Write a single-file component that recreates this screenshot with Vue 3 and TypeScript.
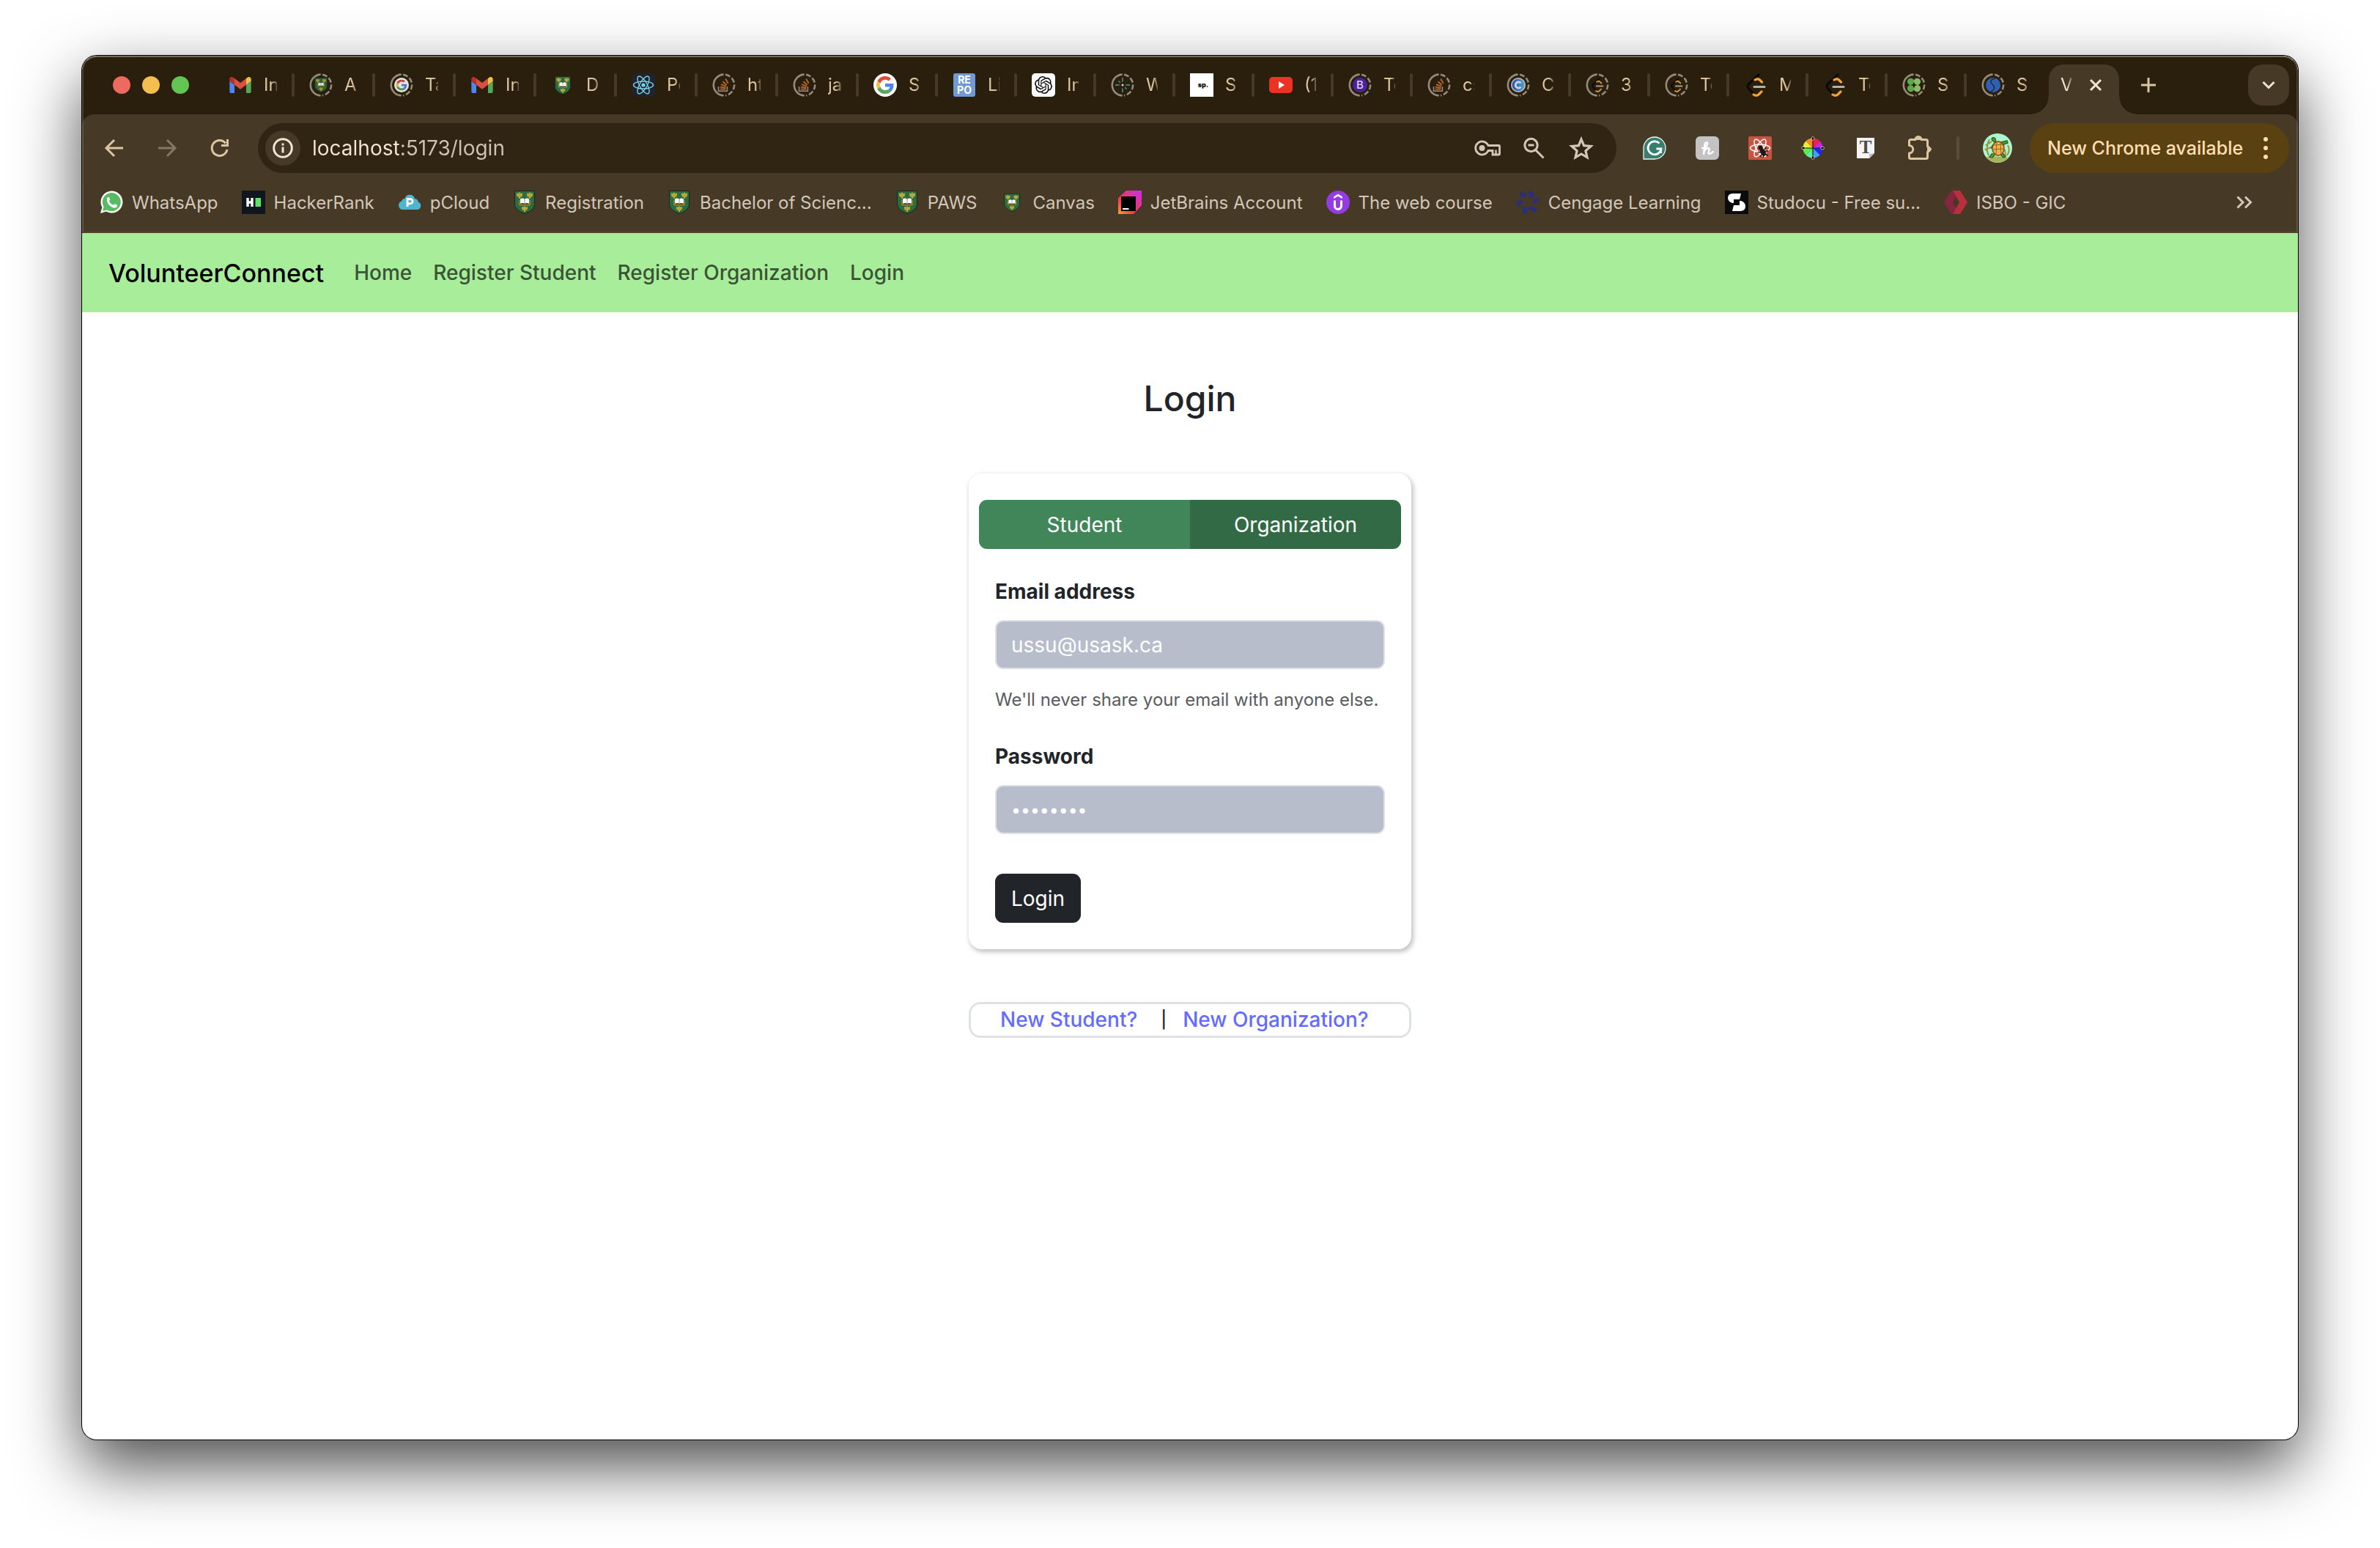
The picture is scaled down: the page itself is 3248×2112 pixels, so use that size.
<script setup lang="ts">
import { ref } from 'vue'

interface Tab {
  icon: string
  label: string
  wide?: boolean
  asleep?: boolean
}

interface Entry {
  icon: string
  label: string
}

interface Glyph {
  text: string
  x: number
  y: number
  size: number
  weight: number
  fill: string
  serif?: boolean
}

const tabs: Tab[] = [
  { icon: 'gmail', label: 'Inbox', wide: true },
  { icon: 'crest', label: 'Apply', wide: true, asleep: true },
  { icon: 'google', label: 'Tasks', wide: true, asleep: true },
  { icon: 'gmail', label: 'Inbox', wide: true },
  { icon: 'crest-small', label: 'D', wide: true },
  { icon: 'react', label: 'Portfolio', wide: true },
  { icon: 'stack', label: 'html', wide: true, asleep: true },
  { icon: 'stack', label: 'java', wide: true, asleep: true },
  { icon: 'google', label: 'S' },
  { icon: 'repo', label: 'Lib' },
  { icon: 'openai', label: 'Im' },
  { icon: 'spark', label: 'Web', asleep: true },
  { icon: 'sp', label: 'S' },
  { icon: 'youtube', label: '(1)' },
  { icon: 'bootstrap', label: 'Toggle', asleep: true },
  { icon: 'stack', label: 'css', asleep: true },
  { icon: 'ring-c', label: 'C', asleep: true },
  { icon: 'leet', label: '3', asleep: true },
  { icon: 'leet', label: 'Top', asleep: true },
  { icon: 'leet', label: 'Max' },
  { icon: 'leet', label: 'Top' },
  { icon: 'clover', label: 'S', asleep: true },
  { icon: 'wave', label: 'S', asleep: true },
]

const extensions: Entry[] = [
  { icon: 'grammarly', label: 'Grammarly' },
  { icon: 'honey', label: 'Honey' },
  { icon: 'react-dev', label: 'React Developer Tools' },
  { icon: 'wheel', label: 'Color picker' },
  { icon: 'whatfont', label: 'Fonts' },
  { icon: 'puzzle', label: 'Extensions' },
]

const bookmarks: Entry[] = [
  { icon: 'whatsapp', label: 'WhatsApp' },
  { icon: 'hackerrank', label: 'HackerRank' },
  { icon: 'pcloud', label: 'pCloud' },
  { icon: 'crest', label: 'Registration' },
  { icon: 'crest', label: 'Bachelor of Scienc...' },
  { icon: 'crest', label: 'PAWS' },
  { icon: 'crest-small', label: 'Canvas' },
  { icon: 'jetbrains', label: 'JetBrains Account' },
  { icon: 'udemy', label: 'The web course' },
  { icon: 'cengage', label: 'Cengage Learning' },
  { icon: 'studocu', label: 'Studocu - Free su...' },
  { icon: 'isbo', label: 'ISBO - GIC' },
]

/* Lettering that sits on top of an icon's artwork, in its 32-unit box. */
const glyphs: Record<string, Glyph[]> = {
  repo: [
    { text: 'RE', x: 16, y: 14, size: 14, weight: 700, fill: '#fff' },
    { text: 'PO', x: 16, y: 28, size: 14, weight: 700, fill: '#fff' },
  ],
  sp: [{ text: 'sp.', x: 18, y: 19, size: 9, weight: 900, fill: '#111' }],
  bootstrap: [{ text: 'B', x: 16, y: 21, size: 15, weight: 500, fill: '#d9d4e0' }],
  whatfont: [{ text: 'T', x: 16, y: 23, size: 25, weight: 700, fill: '#4a4a4a', serif: true }],
}

const navLinks: string[] = ['Home', 'Register Student', 'Register Organization', 'Login']
const roles: string[] = ['Student', 'Organization']

const url = ref<string>('localhost:5173/login')
const role = ref<string>('Organization')
const email = ref<string>('ussu@usask.ca')
const password = ref<string>('password')
</script>

<template>
  <svg class="sprite" aria-hidden="true">
    <defs>
      <linearGradient id="jb" x1="0" y1="1" x2="1" y2="0">
        <stop offset="0" stop-color="#fca02a" />
        <stop offset=".35" stop-color="#f43a4a" />
        <stop offset="1" stop-color="#c82df0" />
      </linearGradient>
      <linearGradient id="cg" x1="0" y1="0" x2="1" y2="0">
        <stop offset="0" stop-color="#2a55c8" />
        <stop offset="1" stop-color="#54b8e0" />
      </linearGradient>
    </defs>
    <symbol id="ring" viewBox="0 0 32 32">
      <g fill="none" stroke="#958b7d" stroke-width="2.6">
        <path d="M14.6 1.6A14.5 14.5 0 0 0 14.6 30.4" stroke-linecap="round" />
        <path d="M18 1.7A14.5 14.5 0 0 1 18 30.3" stroke-dasharray="7 2.8" />
      </g>
    </symbol>
    <symbol id="gmail" viewBox="0 0 32 32">
      <svg x="1" y="5" width="30" height="22" viewBox="52 42 88 66">
        <path fill="#4f86ec" d="M58 108h14V74L52 59v43c0 3.32 2.69 6 6 6" />
        <path fill="#58a55c" d="M120 108h14c3.32 0 6-2.69 6-6V59l-20 15" />
        <path fill="#f1bf42" d="M120 48v26l20-15v-8c0-7.42-8.47-11.65-14.4-7.2" />
        <path fill="#d95040" d="M72 74V48l24 18 24-18v26L96 92" />
        <path fill="#b4322a" d="M52 51v8l20 15V48l-5.6-4.4c-5.94-4.45-14.4-.22-14.4 7.2" />
      </svg>
    </symbol>
    <symbol id="crest" viewBox="0 0 32 32">
      <path d="M2.500.5h27v18q0 8-13.500 13Q2.500 26.500 2.500 18.500z" fill="#2f6b41" stroke="#16281b" />
      <g fill="#b3a83c">
        <path d="M9 2l1.500 2 2.500-.500v3l-1 2-2 .500v2H8V9l-2-.500-1-2v-3l2.500.500zM23 2l1.500 2 2.500-.500v3l-1 2-2 .500v2h-2V9l-2-.500-1-2v-3l2.500.500zM16 21l1.500 1.500 2.500-.500v3l-1 1.500-2 .500v2h-2v-2l-2-.500-1-1.500v-3l2.500.500z" />
      </g>
      <path d="M9 13v6.500h14V13" fill="#15180d" stroke="#d9b93a" stroke-width="1" />
      <path d="M10 11.500q3.500-2 6 .500 2.500-2.500 6-.500v6.500q-3.500-1.500-6 0-2.500-1.500-6 0z" fill="#fff" />
      <path d="M16 12v6" stroke="#777" stroke-width=".8" />
    </symbol>
    <symbol id="crest-small" viewBox="0 0 32 32">
      <use href="#crest" x="3" y="4" width="26" height="25" />
    </symbol>
    <symbol id="google" viewBox="0 0 32 32">
      <circle cx="16" cy="16" r="16" fill="#fff" />
      <svg x="4" y="4" width="24" height="24" viewBox="0 0 48 48">
        <path fill="#d94f3d" d="M24 9.500c3.540 0 6.710 1.220 9.210 3.600l6.850-6.850C35.900 2.380 30.470 0 24 0 14.620 0 6.510 5.380 2.560 13.220l7.980 6.190C12.430 13.720 17.740 9.500 24 9.500z" />
        <path fill="#4f86ec" d="M46.980 24.550c0-1.570-.15-3.090-.38-4.550H24v9.020h12.940c-.58 2.960-2.260 5.480-4.780 7.180l7.730 6c4.510-4.180 7.090-10.360 7.090-17.650z" />
        <path fill="#f1bf42" d="M10.530 28.590c-.48-1.450-.76-2.990-.76-4.590s.27-3.140.76-4.590l-7.980-6.190C.92 16.460 0 20.120 0 24c0 3.880.92 7.540 2.560 10.780l7.970-6.190z" />
        <path fill="#58a55c" d="M24 48c6.480 0 11.930-2.130 15.890-5.810l-7.730-6c-2.150 1.450-4.920 2.300-8.160 2.300-6.260 0-11.570-4.220-13.470-9.910l-7.980 6.190C6.510 42.620 14.620 48 24 48z" />
      </svg>
    </symbol>
    <symbol id="react" viewBox="0 0 32 32">
      <rect width="32" height="32" rx="5" fill="#20232a" />
      <g fill="none" stroke="#7ad2ea" stroke-width="1.400">
        <ellipse cx="16" cy="16" rx="13.500" ry="5" />
        <ellipse cx="16" cy="16" rx="13.500" ry="5" transform="rotate(60 16 16)" />
        <ellipse cx="16" cy="16" rx="13.500" ry="5" transform="rotate(120 16 16)" />
      </g>
      <circle cx="16" cy="16" r="2.600" fill="#7ad2ea" />
    </symbol>
    <symbol id="stack" viewBox="0 0 32 32">
      <path d="M4 19v10h19V19" fill="none" stroke="#a39d94" stroke-width="2.400" />
      <g stroke="#d1702f" stroke-width="3">
        <path d="M7.500 25h12M7.800 20.200l12 2M9.500 14.500l11 4.500M13.500 8.500l8.500 7.500M19.500 2.500l5.500 10" />
      </g>
    </symbol>
    <symbol id="repo" viewBox="0 0 32 32">
      <rect x="1" width="30" height="32" rx="3" fill="#7199d2" />
    </symbol>
    <symbol id="openai" viewBox="0 0 32 32">
      <rect width="32" height="32" rx="5" fill="#fff" />
      <svg x="4" y="4" width="24" height="24" viewBox="0 0 24 24">
        <path fill="#111" d="M22.2819 9.8211a5.9847 5.9847 0 0 0-.5157-4.9108 6.0462 6.0462 0 0 0-6.5098-2.9A6.0651 6.0651 0 0 0 4.9807 4.1818a5.9847 5.9847 0 0 0-3.9977 2.9 6.0462 6.0462 0 0 0 .7427 7.0966 5.98 5.98 0 0 0 .511 4.9107 6.051 6.051 0 0 0 6.5146 2.9001A5.9847 5.9847 0 0 0 13.2599 24a6.0557 6.0557 0 0 0 5.7718-4.2058 5.9894 5.9894 0 0 0 3.9977-2.9001 6.0557 6.0557 0 0 0-.7475-7.0729zm-9.022 12.6081a4.4755 4.4755 0 0 1-2.8764-1.0408l.1419-.0804 4.7783-2.7582a.7948.7948 0 0 0 .3927-.6813v-6.7369l2.02 1.1686a.071.071 0 0 1 .038.052v5.5826a4.504 4.504 0 0 1-4.4945 4.4944zm-9.6607-4.1254a4.4708 4.4708 0 0 1-.5346-3.0137l.142.0852 4.783 2.7582a.7712.7712 0 0 0 .7806 0l5.8428-3.3685v2.3324a.0804.0804 0 0 1-.0332.0615L9.74 19.9502a4.4992 4.4992 0 0 1-6.1408-1.6464zM2.3408 7.8956a4.485 4.485 0 0 1 2.3655-1.9728V11.6a.7664.7664 0 0 0 .3879.6765l5.8144 3.3543-2.0201 1.1685a.0757.0757 0 0 1-.071 0l-4.8303-2.7865A4.504 4.504 0 0 1 2.3408 7.872zm16.5963 3.8558L13.1038 8.364 15.1192 7.2a.0757.0757 0 0 1 .071 0l4.8303 2.7913a4.4944 4.4944 0 0 1-.6765 8.1042v-5.6772a.79.79 0 0 0-.407-.667zm2.0107-3.0231l-.142-.0852-4.7735-2.7818a.7759.7759 0 0 0-.7854 0L9.409 9.2297V6.8974a.0662.0662 0 0 1 .0284-.0615l4.8303-2.7866a4.4992 4.4992 0 0 1 6.6802 4.66zM8.3065 12.863l-2.02-1.1638a.0804.0804 0 0 1-.038-.0567V6.0742a4.4992 4.4992 0 0 1 7.3757-3.4537l-.142.0805L8.704 5.459a.7948.7948 0 0 0-.3927.6813zm1.0976-2.3654l2.602-1.4998 2.6069 1.4998v2.9994l-2.5974 1.4997-2.6067-1.4997Z" />
      </svg>
    </symbol>
    <symbol id="spark" viewBox="0 0 32 32">
      <path d="M16 0v9M16 23v9M0 16h9M23 16h9" stroke="#3f8f86" stroke-width="3" />
      <path d="M7 7l4 4M25 25l-4-4" stroke="#3f8f86" stroke-width="2.500" />
      <circle cx="16" cy="16" r="2.500" fill="#e8e4dc" />
    </symbol>
    <symbol id="sp" viewBox="0 0 32 32">
      <rect width="32" height="32" fill="#fff" />
    </symbol>
    <symbol id="youtube" viewBox="0 0 32 32">
      <rect y="5" width="32" height="22" rx="5" fill="#ea3323" />
      <path d="M13 11v10l8-5z" fill="#fff" />
    </symbol>
    <symbol id="bootstrap" viewBox="0 0 32 32">
      <circle cx="16" cy="16" r="16" fill="#5420b4" />
    </symbol>
    <symbol id="ring-c" viewBox="0 0 32 32">
      <circle cx="16" cy="16" r="16" fill="#d8d5cf" />
      <circle cx="16" cy="16" r="13.500" fill="url(#cg)" />
      <path d="M21.500 12a6.500 6.500 0 1 0 0 8" fill="none" stroke="#e8eef5" stroke-width="4.500" />
    </symbol>
    <symbol id="leet" viewBox="0 0 32 32">
      <g fill="none" stroke-linecap="round" stroke-width="3.200" transform="translate(2 0)">
        <path d="M18 2L5 14q-3.500 3.500-.500 7l7.500 8" stroke="#0c0a06" />
        <path d="M13 9q4-2.500 6.500 0l3 3M11 29q4 2.500 7 0l4-4" stroke="#efa23a" />
        <path d="M12 18.500h14" stroke="#b3b1ae" />
      </g>
    </symbol>
    <symbol id="clover" viewBox="0 0 32 32">
      <g fill="#62bd50">
        <circle cx="9" cy="8.500" r="7.500" />
        <circle cx="9" cy="23.500" r="7.500" />
        <rect x="8" y="8" width="7" height="16" />
      </g>
      <g fill="#97d079">
        <circle cx="23" cy="8.500" r="7.500" />
        <circle cx="23" cy="23.500" r="7.500" />
        <rect x="17" y="8" width="7" height="16" />
      </g>
      <path d="M16 9l2 5 5 2-5 2-2 5-2-5-5-2 5-2zM0 16l5-1.500v3zM32 16l-5-1.500v3z" fill="#2a1f0d" />
    </symbol>
    <symbol id="wave" viewBox="0 0 32 32">
      <circle cx="16" cy="16" r="16" fill="#2f69cc" />
      <path d="M23 1C9 3 9 10 14 14s8 12-4 17" fill="none" stroke="#22304a" stroke-width="2.500" />
    </symbol>

    <symbol id="grammarly" viewBox="0 0 32 32">
      <path d="M1 31V16A15 15 0 1 1 16 31z" fill="#377f6d" stroke="#f3f6f5" stroke-width="1.300" />
      <path d="M22.500 9.500A9 9 0 1 0 25 17h-6.500M24.500 16.500V23" fill="none" stroke="#fff" stroke-width="2.800" />
    </symbol>
    <symbol id="honey" viewBox="0 0 32 32">
      <rect width="32" height="32" rx="6" fill="#c3c3c3" />
      <path d="M9 16q6-1 7-5c1-4-3-3-3.500 0L11 24c1-6 3-8 6-8s1 4 .500 6 3 3 6-1" fill="none" stroke="#fff" stroke-width="2.500" stroke-linecap="round" stroke-linejoin="round" />
    </symbol>
    <symbol id="react-dev" viewBox="0 0 32 32">
      <rect width="32" height="32" rx="2" fill="#c95240" />
      <g fill="none" stroke="#fff" stroke-width="1.500">
        <ellipse cx="16" cy="16" rx="13.500" ry="5" />
        <ellipse cx="16" cy="16" rx="13.500" ry="5" transform="rotate(60 16 16)" />
        <ellipse cx="16" cy="16" rx="13.500" ry="5" transform="rotate(120 16 16)" />
      </g>
      <circle cx="16.500" cy="15.500" r="3" fill="#1c1a18" />
      <ellipse cx="20" cy="21.500" rx="3.500" ry="5.500" transform="rotate(-30 20 21.500)" fill="#1c1a18" />
      <path d="M13 21.500h6M16 28l4-5M22 18l2-3M23 20.500l4-1M23 24l4 2.500M20.500 29v-4" stroke="#1c1a18" stroke-width="1.600" />
    </symbol>
    <symbol id="wheel" viewBox="0 0 32 32">
      <g transform="translate(16 16)">
        <path d="M0 0L-13.500 0A13.500 13.500 0 0 1-9.500-9.500z" fill="#e9ee3a" />
        <path d="M0 0L-9.500-9.500A13.500 13.500 0 0 1 0-13.500z" fill="#f58b2c" />
        <path d="M0 0V-13.500A13.500 13.500 0 0 1 9.500-9.500z" fill="#ee2149" />
        <path d="M0 0L9.500-9.500A13.500 13.500 0 0 1 13.500 0z" fill="#c826e8" />
        <path d="M0 0H13.500A13.500 13.500 0 0 1 9.500 9.500z" fill="#2525f0" />
        <path d="M0 0L9.500 9.500A13.500 13.500 0 0 1 0 13.500z" fill="#3aa6f5" />
        <path d="M0 0V13.500A13.500 13.500 0 0 1-9.500 9.500z" fill="#56efa5" />
        <path d="M0 0L-9.500 9.500A13.500 13.500 0 0 1-13.500 0z" fill="#5df03e" />
        <path d="M0-15V15M-15 0H15" stroke="#221c14" stroke-width="1.200" />
        <g fill="#000" stroke="#ddd" stroke-width=".8">
          <ellipse cx="0" cy="-13" rx="1.800" ry="2.400" />
          <ellipse cx="0" cy="13" rx="1.800" ry="2.400" />
          <ellipse cx="-13" cy="0" rx="2.400" ry="1.800" />
          <ellipse cx="13" cy="0" rx="2.400" ry="1.800" />
        </g>
      </g>
    </symbol>
    <symbol id="whatfont" viewBox="0 0 32 32">
      <path d="M4 2h24v21l-7 7H4z" fill="#f4f4f4" />
      <path d="M21 30v-6l7-1z" fill="#bdbdbd" />
    </symbol>
    <symbol id="puzzle" viewBox="0 0 32 32" overflow="visible">
      <g transform="translate(2 0)">
        <path d="M3.500 4.500H10a4 4 0 0 1 8 0h6.500a2 2 0 0 1 2 2V14a4 4 0 0 1 0 7.500V28.500a2 2 0 0 1-2 2h-21a2 2 0 0 1-2-2V23a5 5 0 0 0 0-10.500V6.500a2 2 0 0 1 2-2z" fill="none" stroke="#dcc6a2" stroke-width="3" stroke-linejoin="round" />
        <path d="M10 5q0-5 4-5t4 5zM26 13.500q6 1 6 4t-6 4z" fill="#dcc6a2" />
      </g>
    </symbol>

    <symbol id="whatsapp" viewBox="0 0 32 32">
      <path d="M1 31l2.300-8.200A15 15 0 1 1 9 28.600z" fill="#fff" />
      <path d="M4 28l1.600-5.900A12.500 12.500 0 1 1 10 26.400z" fill="#57bb63" />
      <path d="M10.500 9.500c1-1 2-.800 2.500 0l1.200 2.800c.2.700-1.400 2-1.200 2.500 1.200 2.300 3 4 5.500 5 .6.200 1.600-1.800 2.300-1.600l2.900 1.400c.6.300.4 2.400-.8 3.300-5.400 3.500-15.800-6.500-12.400-13.400z" fill="#fff" />
    </symbol>
    <symbol id="hackerrank" viewBox="0 0 32 32">
      <rect width="32" height="32" fill="#10151e" />
      <path d="M8 10v12M14 10v12M8 16h6" stroke="#fff" stroke-width="3.400" />
      <rect x="18.500" y="10" width="7.500" height="12" fill="#5be467" />
    </symbol>
    <symbol id="pcloud" viewBox="0 0 32 32">
      <path d="M6 26a6 6 0 0 1-1-11.500q1-3.500 4.500-3.500a7 7 0 0 1 13.500 0q4.500.500 4.800 4.500A5.500 5.500 0 0 1 27 26z" fill="#4fb4cd" />
      <path d="M13 22V11.500h4a3 3 0 0 1 0 6.300h-4" fill="none" stroke="#fff" stroke-width="2.800" />
    </symbol>
    <symbol id="jetbrains" viewBox="0 0 32 32">
      <path d="M0 10L11 0h21v20L21 32H0z" fill="url(#jb)" />
      <rect x="4" y="8" width="20" height="20" fill="#000" />
      <rect x="6" y="24" width="8.500" height="2" fill="#fff" />
    </symbol>
    <symbol id="udemy" viewBox="0 0 32 32">
      <circle cx="16" cy="16" r="16" fill="#953be4" />
      <path d="M10.500 10.500v-2L16 5l5.500 3.500v2L16 7.300z" fill="#fff" stroke="#fff" stroke-width=".8" />
      <path d="M11.500 13.500v7.500a4.500 4.500 0 0 0 9 0v-7.500" fill="none" stroke="#fff" stroke-width="3" />
    </symbol>
    <symbol id="cengage" viewBox="0 0 32 32">
      <g fill="#2a2f7c">
        <rect x="17.500" y="1" width="6.500" height="9" transform="rotate(-8 20 6)" />
        <rect x="5" y="3" width="8.500" height="6" transform="rotate(15 9 6)" />
        <rect x="0" y="14.500" width="9" height="5.500" transform="rotate(-42 4 17)" />
        <rect x="22.500" y="11" width="9" height="5.500" transform="rotate(-42 27 14)" />
        <rect x="8.500" y="22" width="6.500" height="9" transform="rotate(-8 12 26)" />
        <rect x="18" y="22.500" width="10" height="5.500" transform="rotate(20 23 25)" />
      </g>
    </symbol>
    <symbol id="studocu" viewBox="0 0 32 32">
      <rect width="32" height="32" fill="#0b0b0b" />
      <path d="M22 4l-2 8h-8v5h-2q-6-2-6-7 0-6 7-6zM10 28l2-8h8v-6h2q6 2 6 7.500 0 6.500-7 6.500z" fill="#fff" />
    </symbol>
    <symbol id="isbo" viewBox="0 0 32 32">
      <path d="M10 0h5l4 5-7 11 7 11-4 5h-5L0 16z" fill="#84263f" />
      <path d="M12 0h10l10 16-10 16H12l9-16z" fill="#b8303f" />
    </symbol>
  </svg>

  <div class="desktop">
    <div class="window">
      <header class="chrome">
        <div class="tabstrip">
          <div class="lights">
            <button class="light red" aria-label="Close window"></button>
            <button class="light yellow" aria-label="Minimize window"></button>
            <button class="light green" aria-label="Zoom window"></button>
          </div>
          <div class="tabs">
            <button v-for="(tab, i) in tabs" :key="i" class="tab" :class="{ wide: tab.wide }">
              <svg class="favicon" viewBox="0 0 32 32">
                <template v-if="tab.asleep">
                  <use href="#ring" width="32" height="32" />
                  <use :href="'#' + tab.icon" x="6" y="6" width="20" height="20" opacity=".88" />
                </template>
                <use v-else :href="'#' + tab.icon" width="32" height="32" />
                <text
                  v-for="g in glyphs[tab.icon] ?? []"
                  :key="g.text"
                  :x="g.x"
                  :y="g.y"
                  :font-size="g.size"
                  :font-weight="g.weight"
                  :fill="g.fill"
                  text-anchor="middle"
                >{{ g.text }}</text>
              </svg>
              <span class="tab-label">{{ tab.label }}</span>
            </button>
          </div>
          <div class="tab-active">
            <span class="tab-label">Vol</span>
            <button aria-label="Close tab">
              <svg width="18" height="18" viewBox="0 0 18 18"><path d="M2 2l14 14M16 2L2 16" stroke="#f0e4d2" stroke-width="3" /></svg>
            </button>
          </div>
          <button class="new-tab" aria-label="New tab">
            <svg width="20" height="20" viewBox="0 0 20 20"><path d="M10 0v20M0 10h20" stroke="#d9c5a3" stroke-width="3" /></svg>
          </button>
          <button class="tab-search" aria-label="Search tabs">
            <svg width="20" height="12" viewBox="0 0 20 12"><path d="M2.500 2l7.500 7.500L17.500 2" fill="none" stroke="#f0e4d2" stroke-width="3" /></svg>
          </button>
        </div>

        <div class="toolbar">
          <div class="nav-buttons">
            <button class="tool" aria-label="Back">
              <svg width="28" height="28" viewBox="0 0 28 28"><path d="M26 14H4M14 3L3 14l11 11" fill="none" stroke="#dcc6a2" stroke-width="3" /></svg>
            </button>
            <button class="tool" aria-label="Forward">
              <svg width="28" height="28" viewBox="0 0 28 28"><path d="M2 14h22M14 3l11 11-11 11" fill="none" stroke="#857862" stroke-width="3" /></svg>
            </button>
            <button class="tool" aria-label="Reload">
              <svg width="28" height="28" viewBox="0 0 28 28"><path d="M24 16A10.500 10.500 0 1 1 22 7.500M24.500 2v8.500H16" fill="none" stroke="#dcc6a2" stroke-width="3" /></svg>
            </button>
          </div>
          <div class="omnibox">
            <button class="site-info" aria-label="Site information">
              <svg width="28" height="28" viewBox="0 0 28 28"><circle cx="14" cy="14" r="12.300" fill="none" stroke="#f0e4d2" stroke-width="3" /><path d="M14 12.500v8M14 7.500v3" stroke="#f0e4d2" stroke-width="3" /></svg>
            </button>
            <input v-model="url" class="url" type="text" aria-label="Address" />
            <div class="omni-icons">
              <button aria-label="Passwords">
                <svg width="36" height="24" viewBox="0 0 36 24"><path d="M19 8.500A9 9 0 1 0 19 15.500h6V21h8.500a1 1 0 0 0 1-1V9.500a1 1 0 0 0-1-1z" fill="none" stroke="#d2c7b9" stroke-width="2.800" /><circle cx="10.500" cy="12" r="4" fill="#d2c7b9" /><path d="M29.500 14.500V20" stroke="#d2c7b9" stroke-width="2.400" /></svg>
              </button>
              <button aria-label="Zoom">
                <svg width="36" height="30" viewBox="0 0 36 30"><circle cx="13.500" cy="11" r="8.700" fill="none" stroke="#d2c7b9" stroke-width="3" /><path d="M19.500 17.500L30.500 28.500M9.500 11h8" stroke="#d2c7b9" stroke-width="3" /></svg>
              </button>
              <button aria-label="Bookmark this page">
                <svg width="36" height="34" viewBox="0 0 36 34"><path d="M18 5l3.600 8.700 9.400.8-7.100 6.200 2.100 9.100L18 25l-8 4.800 2.100-9.100L5 14.500l9.400-.8z" fill="none" stroke="#d2c7b9" stroke-width="3.200" /></svg>
              </button>
            </div>
          </div>
          <div class="extensions">
            <button v-for="ext in extensions" :key="ext.icon" class="tool" :aria-label="ext.label">
              <svg class="favicon" viewBox="0 0 32 32">
                <use :href="'#' + ext.icon" width="32" height="32" />
                <text
                  v-for="g in glyphs[ext.icon] ?? []"
                  :key="g.text"
                  :x="g.x"
                  :y="g.y"
                  :font-size="g.size"
                  :font-weight="g.weight"
                  :fill="g.fill"
                  :class="{ serif: g.serif }"
                  text-anchor="middle"
                >{{ g.text }}</text>
              </svg>
            </button>
          </div>
          <span class="divider"></span>
          <button class="avatar" aria-label="Profile">
            <svg width="40" height="40" viewBox="0 0 40 40">
              <circle cx="20" cy="20" r="20" fill="#adf5cf" />
              <path d="M4 32q16-2 31 1A20 20 0 0 1 7 35z" fill="#a9b45a" />
              <path d="M8 30Q3 20 9 8M6 24l-3-3M7 18l-3-3M8 14l4-3M7 21l5-3M33 30q5-7 1-14M31 31l-1-9" fill="none" stroke="#9a8f3a" stroke-width="2" />
              <path d="M14 10l4 5M17 7q-4-3-5 1 1 3 6 4zM25 12l8-2 1 3-8 3M13 27l-4 5 4 1 4-5M27 27l4 5-3 1-4-4M14 15l-3 6" fill="#4f9a3c" stroke="#2f6a28" stroke-width="1.500" />
              <ellipse cx="21" cy="20.500" rx="8" ry="9.500" fill="#eab64a" stroke="#7b4a18" stroke-width="1.500" />
              <path d="M15 16l12-1M14 22l14-1M19 12l-1 17M24 12l1 17" stroke="#9b6420" stroke-width="1" />
            </svg>
          </button>
          <button class="update">
            <span>New Chrome available</span>
            <svg width="6" height="32" viewBox="0 0 6 32"><g fill="#ffdfb2"><circle cx="3" cy="4" r="3" /><circle cx="3" cy="16" r="3" /><circle cx="3" cy="28" r="3" /></g></svg>
          </button>
        </div>

        <nav class="bookmarks" aria-label="Bookmarks">
          <a v-for="mark in bookmarks" :key="mark.label" class="bookmark" href="#">
            <svg class="favicon"><use :href="'#' + mark.icon" /></svg>
            <span>{{ mark.label }}</span>
          </a>
          <button class="more" aria-label="More bookmarks">
            <svg width="22" height="18" viewBox="0 0 22 18"><path d="M1.500 1.500L9 9l-7.500 7.500M12 1.500L19.500 9 12 16.500" fill="none" stroke="#d2c7b9" stroke-width="3" /></svg>
          </button>
        </nav>
      </header>

      <nav class="navbar">
        <a class="brand" href="#">VolunteerConnect</a>
        <a v-for="link in navLinks" :key="link" class="nav-link" href="#">{{ link }}</a>
      </nav>

      <main class="page">
        <h1 class="title">Login</h1>
        <section class="card">
          <div class="roles">
            <button
              v-for="item in roles"
              :key="item"
              type="button"
              class="role"
              :class="{ active: item === role }"
              @click="role = item"
            >{{ item }}</button>
          </div>
          <form class="form" @submit.prevent>
            <label class="label" for="email">Email address</label>
            <input id="email" v-model="email" class="field" type="email" />
            <p class="hint">We'll never share your email with anyone else.</p>
            <label class="label" for="password">Password</label>
            <input id="password" v-model="password" class="field secret" type="password" />
            <button class="submit" type="submit">Login</button>
          </form>
        </section>
        <div class="signup">
          <a href="#">New Student?</a>
          <span class="bar">|</span>
          <a href="#">New Organization?</a>
        </div>
      </main>
    </div>
  </div>
</template>

<style>
body {
  margin: 0;
  background: #fff;
}
</style>

<style scoped>
* {
  box-sizing: border-box;
}

.sprite {
  position: absolute;
  width: 0;
  height: 0;
}

.desktop {
  display: flex;
  min-height: 100vh;
  padding: 76px 112px 148px;
  font-family: Inter, "Liberation Sans", sans-serif;
  color: #212529;
}

.desktop button,
.desktop input {
  margin: 0;
  padding: 0;
  border: 0;
  background: none;
  color: inherit;
  font: inherit;
}

.desktop a {
  color: inherit;
  text-decoration: none;
}

.desktop svg {
  display: block;
  flex: none;
}

.desktop .serif {
  font-family: "Liberation Serif", serif;
}

.window {
  display: flex;
  flex: 1;
  flex-direction: column;
  min-width: 0;
  overflow: hidden;
  border-radius: 20px;
  background: #fff;
  box-shadow: 0 0 0 1px #000, 0 36px 88px rgba(0, 0, 0, 0.71);
}

.chrome {
  position: relative;
  border-bottom: 2px solid #50463a;
  border-radius: 20px 20px 0 0;
  background: #2a1f0d;
}

/* Thin highlight along the window's top and side edges. */
.chrome::after {
  position: absolute;
  inset: 0;
  border: solid rgba(255, 255, 255, 0.16);
  border-width: 2px 2px 0;
  border-top-color: rgba(255, 255, 255, 0.34);
  border-radius: 20px 20px 0 0;
  content: "";
  pointer-events: none;
}

.tabstrip {
  display: flex;
  align-items: center;
  height: 80px;
  padding: 0 12px 0 42px;
}

.lights {
  display: flex;
  gap: 16px;
  margin-right: 32px;
}

.desktop .light {
  width: 24px;
  height: 24px;
  border-radius: 50%;
}

.desktop .red { background: #ed6a5f; }
.desktop .yellow { background: #f5bf4f; }
.desktop .green { background: #62c554; }

.tabs {
  display: flex;
}

.desktop .tab {
  position: relative;
  display: flex;
  align-items: center;
  gap: 16px;
  width: 108px;
  height: 80px;
  padding: 0 22px;
}

.desktop .tab.wide {
  width: 110px;
}

.tab::after {
  position: absolute;
  top: 24px;
  right: -2px;
  width: 4px;
  height: 32px;
  border-radius: 2px;
  background: #463926;
  content: "";
}

.tab:last-child::after {
  display: none;
}

.favicon {
  width: 32px;
  height: 32px;
  overflow: visible;
}

.tab-label {
  flex: 1;
  min-width: 0;
  overflow: hidden;
  color: #dcc6a2;
  font-size: 24px;
  line-height: 32px;
  text-align: left;
  white-space: nowrap;
  -webkit-mask-image: linear-gradient(90deg, #000 60%, transparent 120%);
  mask-image: linear-gradient(90deg, #000 60%, transparent 120%);
}

.tab-active {
  position: relative;
  display: flex;
  align-items: center;
  align-self: flex-end;
  gap: 24px;
  width: 96px;
  height: 68px;
  margin-left: 6px;
  padding: 0 23px 12px 16px;
  border-radius: 20px 20px 0 0;
  background: #463926;
}

.tab-active .tab-label {
  color: #f0e4d2;
}

.tab-active::before,
.tab-active::after {
  position: absolute;
  bottom: 0;
  width: 24px;
  height: 24px;
  content: "";
}

.tab-active::before {
  right: 100%;
  background: radial-gradient(circle at 0 0, transparent 23px, #463926 24px);
}

.tab-active::after {
  left: 100%;
  background: radial-gradient(circle at 100% 0, transparent 23px, #463926 24px);
}

.desktop .new-tab {
  margin-left: 30px;
}

.desktop .tab-search {
  display: grid;
  place-items: center;
  width: 56px;
  height: 56px;
  margin-left: auto;
  border-radius: 20px;
  background: #463926;
}

.toolbar {
  display: flex;
  align-items: center;
  padding: 12px 12px 0 20px;
  border-radius: 16px 16px 0 0;
  background: #463926;
}

.nav-buttons,
.extensions {
  display: flex;
  gap: 24px;
  margin-right: 28px;
}

.desktop .tool {
  display: grid;
  place-items: center;
  width: 48px;
  height: 48px;
}

.omnibox {
  display: flex;
  flex: 1;
  align-items: center;
  min-width: 0;
  height: 68px;
  margin-right: 28px;
  padding: 0 30px 0 10px;
  border-radius: 34px;
  background: #302412;
}

.desktop .site-info {
  display: grid;
  flex: none;
  place-items: center;
  width: 48px;
  height: 48px;
  margin-right: 16px;
  border-radius: 50%;
  background: #463926;
}

/* The host is drawn brighter than the port and path. */
.desktop .url {
  flex: 1;
  min-width: 0;
  height: 48px;
  outline: none;
  background: linear-gradient(90deg, #f3e6d4 118px, #cfc3b4 118px);
  -webkit-background-clip: text;
  background-clip: text;
  font-size: 28px;
  -webkit-text-fill-color: transparent;
}

.omni-icons {
  display: flex;
  align-items: center;
  gap: 28px;
}

.divider {
  width: 4px;
  height: 32px;
  border-radius: 2px;
  background: #5c4d36;
}

.desktop .avatar {
  width: 40px;
  height: 40px;
  margin: 0 24px 0 32px;
}

.desktop .update {
  display: flex;
  align-items: center;
  justify-content: space-between;
  width: 354px;
  height: 68px;
  padding: 0 29px 0 24px;
  border-radius: 34px;
  background: #5a4111;
  color: #ffdfb2;
  font-size: 25px;
  font-weight: 500;
  white-space: nowrap;
}

.bookmarks {
  display: flex;
  align-items: center;
  gap: 32px;
  height: 80px;
  padding: 0 62px 0 24px;
  background: #463926;
  color: #d2c7b9;
  font-size: 24px;
  white-space: nowrap;
}

.bookmark {
  display: flex;
  align-items: center;
  gap: 12px;
}

.desktop .more {
  margin-left: auto;
}

.navbar {
  display: flex;
  align-items: center;
  gap: 29px;
  height: 108px;
  padding: 0 36px;
  background: #a8ed9a;
  font-size: 28px;
  font-weight: 500;
}

.desktop .brand {
  margin-right: 12px;
  color: #000;
  font-size: 34px;
}

.desktop .nav-link {
  color: #3b5336;
}

.page {
  display: flex;
  flex-direction: column;
  align-items: center;
  padding-top: 88px;
}

.title {
  margin: 0 0 72px;
  font-size: 48px;
  font-weight: 500;
  line-height: 60px;
}

.card {
  width: 604px;
  padding: 36px 14px;
  border-radius: 18px;
  background: #fff;
  box-shadow: 2px 3px 6px 1px rgba(0, 0, 0, 0.24);
}

.roles {
  display: flex;
  overflow: hidden;
  border-radius: 11px;
}

.desktop .role {
  flex: 1;
  height: 67px;
  background: #418659;
  color: #fff;
  font-size: 28px;
}

.desktop .role.active {
  background: #336a46;
}

.form {
  display: flex;
  flex-direction: column;
  align-items: flex-start;
  padding: 0 22px;
}

.label {
  margin: 36px 0 17px;
  font-size: 28px;
  font-weight: 700;
  line-height: 44px;
}

.desktop .field {
  width: 100%;
  height: 67px;
  padding: 0 20px;
  border: 2px solid #dee2e6;
  border-radius: 11px;
  background: #b8bdcc;
  color: #fff;
  font-size: 28px;
}

.desktop .secret {
  font-size: 23px;
}

.hint {
  margin: 22px 0 0;
  color: #595c5f;
  font-size: 24px;
  line-height: 39px;
  white-space: nowrap;
}

.desktop .submit {
  height: 67px;
  margin-top: 54px;
  padding: 0 22px;
  border-radius: 11px;
  background: #212529;
  color: #fff;
  font-size: 28px;
}

.signup {
  display: flex;
  align-items: center;
  width: 604px;
  margin-top: 72px;
  padding-left: 40px;
  border: 3px solid #dee2e6;
  border-radius: 16px;
  font-size: 28px;
  line-height: 43px;
}

.signup a {
  color: #646cff;
  font-weight: 500;
}

.signup .bar {
  margin: 0 22px 0 32px;
  font-size: 23px;
  font-weight: 500;
}
</style>
